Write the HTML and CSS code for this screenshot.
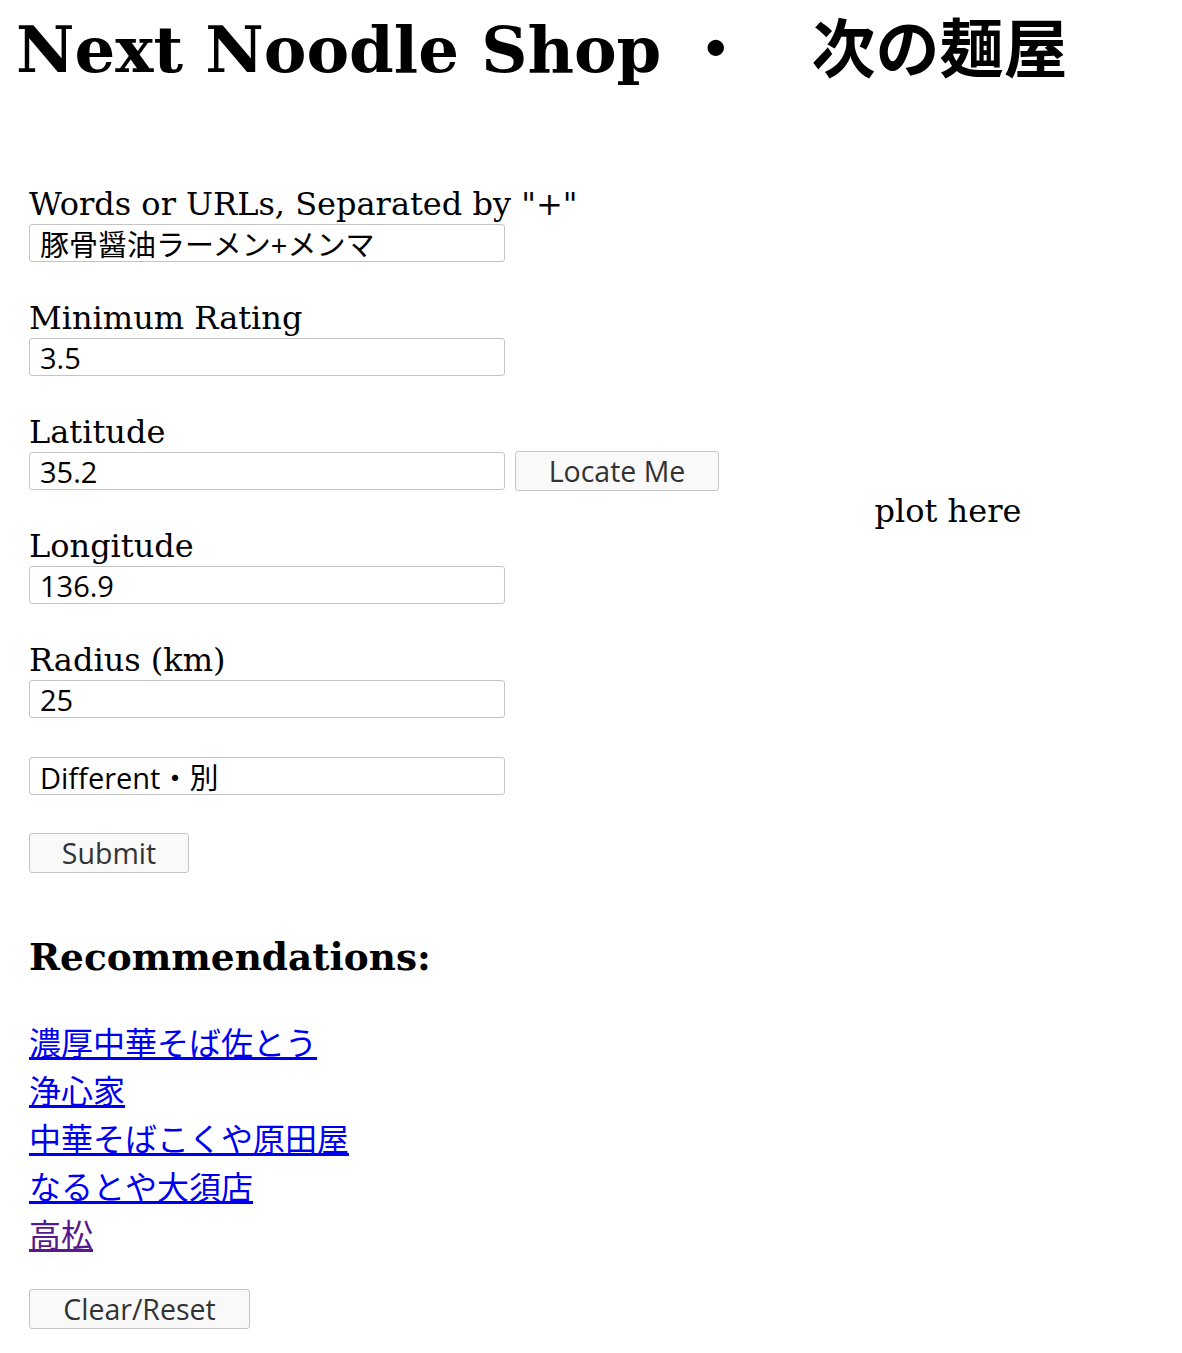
FILE: index.html
```html
<!DOCTYPE html>
<html lang="ja">
<head>
<meta charset="utf-8">
<title>Next Noodle Shop ・ 次の麺屋</title>
<link rel="stylesheet" href="styles.css">
</head>
<body>
<h1 class="title">Next Noodle Shop ・　次の麺屋</h1>
<div class="layout">
  <div class="main">
    <form class="form">
      <div class="field">
        <label class="label" for="q">Words or URLs, Separated by "+"</label>
        <div class="row"><input class="input" id="q" type="text" value="豚骨醤油ラーメン+メンマ"></div>
      </div>
      <div class="field">
        <label class="label" for="r">Minimum Rating</label>
        <div class="row"><input class="input" id="r" type="text" value="3.5"></div>
      </div>
      <div class="field">
        <label class="label" for="lat">Latitude</label>
        <div class="row"><input class="input" id="lat" type="text" value="35.2"><button class="btn btn-locate" type="button">Locate Me</button></div>
      </div>
      <div class="field">
        <label class="label" for="lng">Longitude</label>
        <div class="row"><input class="input" id="lng" type="text" value="136.9"></div>
      </div>
      <div class="field">
        <label class="label" for="rad">Radius (km)</label>
        <div class="row"><input class="input" id="rad" type="text" value="25"></div>
      </div>
      <div class="field">
        <div class="row"><input class="input" type="text" value="Different・別"></div>
      </div>
      <div class="field">
        <div class="row"><button class="btn btn-submit" type="button">Submit</button></div>
      </div>
    </form>
    <h3 class="rec-title">Recommendations:</h3>
    <div class="links">
      <a class="link" href="#a">濃厚中華そば佐とう</a>
      <a class="link" href="#b">浄心家</a>
      <a class="link" href="#c">中華そばこくや原田屋</a>
      <a class="link" href="#d">なるとや大須店</a>
      <a class="link visited" href="#e">高松</a>
    </div>
    <div class="row"><button class="btn btn-clear" type="button">Clear/Reset</button></div>
  </div>
  <div class="plot">plot here</div>
</div>
</body>
</html>
```
FILE: styles.css
```css
html, body {
  margin: 0;
  padding: 0;
  background: #fff;
}
body {
  padding: 18px 16px 0 16px;
  font-family: "DejaVu Serif", "Noto Sans CJK JP", serif;
  font-size: 32px;
  color: #000;
}
.title {
  margin: 0;
  font-size: 64px;
  font-weight: bold;
  line-height: 64px;
  font-family: "DejaVu Serif", "Noto Sans CJK JP", serif;
  white-space: nowrap;
}
.layout {
  display: flex;
  margin-top: 104px;
}
.main {
  width: 714px;
  padding-left: 13px;
  box-sizing: border-box;
}
.form {
  display: flex;
  flex-direction: column;
  gap: 37px;
  margin: 0;
}
.field {
  display: flex;
  flex-direction: column;
}
.label {
  display: block;
  line-height: 37px;
  height: 37px;
}
.row {
  display: flex;
  align-items: center;
  height: 40px;
  gap: 10px;
}
.input {
  box-sizing: border-box;
  width: 476px;
  height: 38px;
  margin: 0;
  padding: 0 10px;
  border: 1px solid #c4c4c4;
  border-radius: 3px;
  background: #fff;
  color: #000;
  font-family: "Open Sans", "Noto Sans CJK JP", sans-serif;
  font-size: 29px;
  outline: none;
}
.btn {
  box-sizing: border-box;
  height: 40px;
  margin: 0;
  padding: 0;
  border: 1px solid #c4c4c4;
  border-radius: 3px;
  background: #f9f9f9;
  color: #333;
  font-family: "Open Sans", "Noto Sans CJK JP", sans-serif;
  font-size: 28.5px;
  line-height: 1;
}
.btn-locate { width: 204px; }
.btn-submit { width: 160px; }
.btn-clear { width: 221px; }
.rec-title {
  margin: 62px 0 0 0;
  font-size: 37.44px;
  font-weight: bold;
  line-height: normal;
}
.links {
  display: flex;
  flex-direction: column;
  align-items: flex-start;
  margin-top: 38px;
  margin-bottom: 32px;
}
.link {
  font-family: "Noto Sans CJK JP", sans-serif;
  font-size: 32px;
  line-height: 48px;
  color: #0000ee;
  text-decoration: underline;
}
.link.visited {
  color: #551a8b;
}
.plot {
  flex: 1;
  height: 650px;
  display: flex;
  align-items: center;
  justify-content: center;
  line-height: 37px;
}
```
